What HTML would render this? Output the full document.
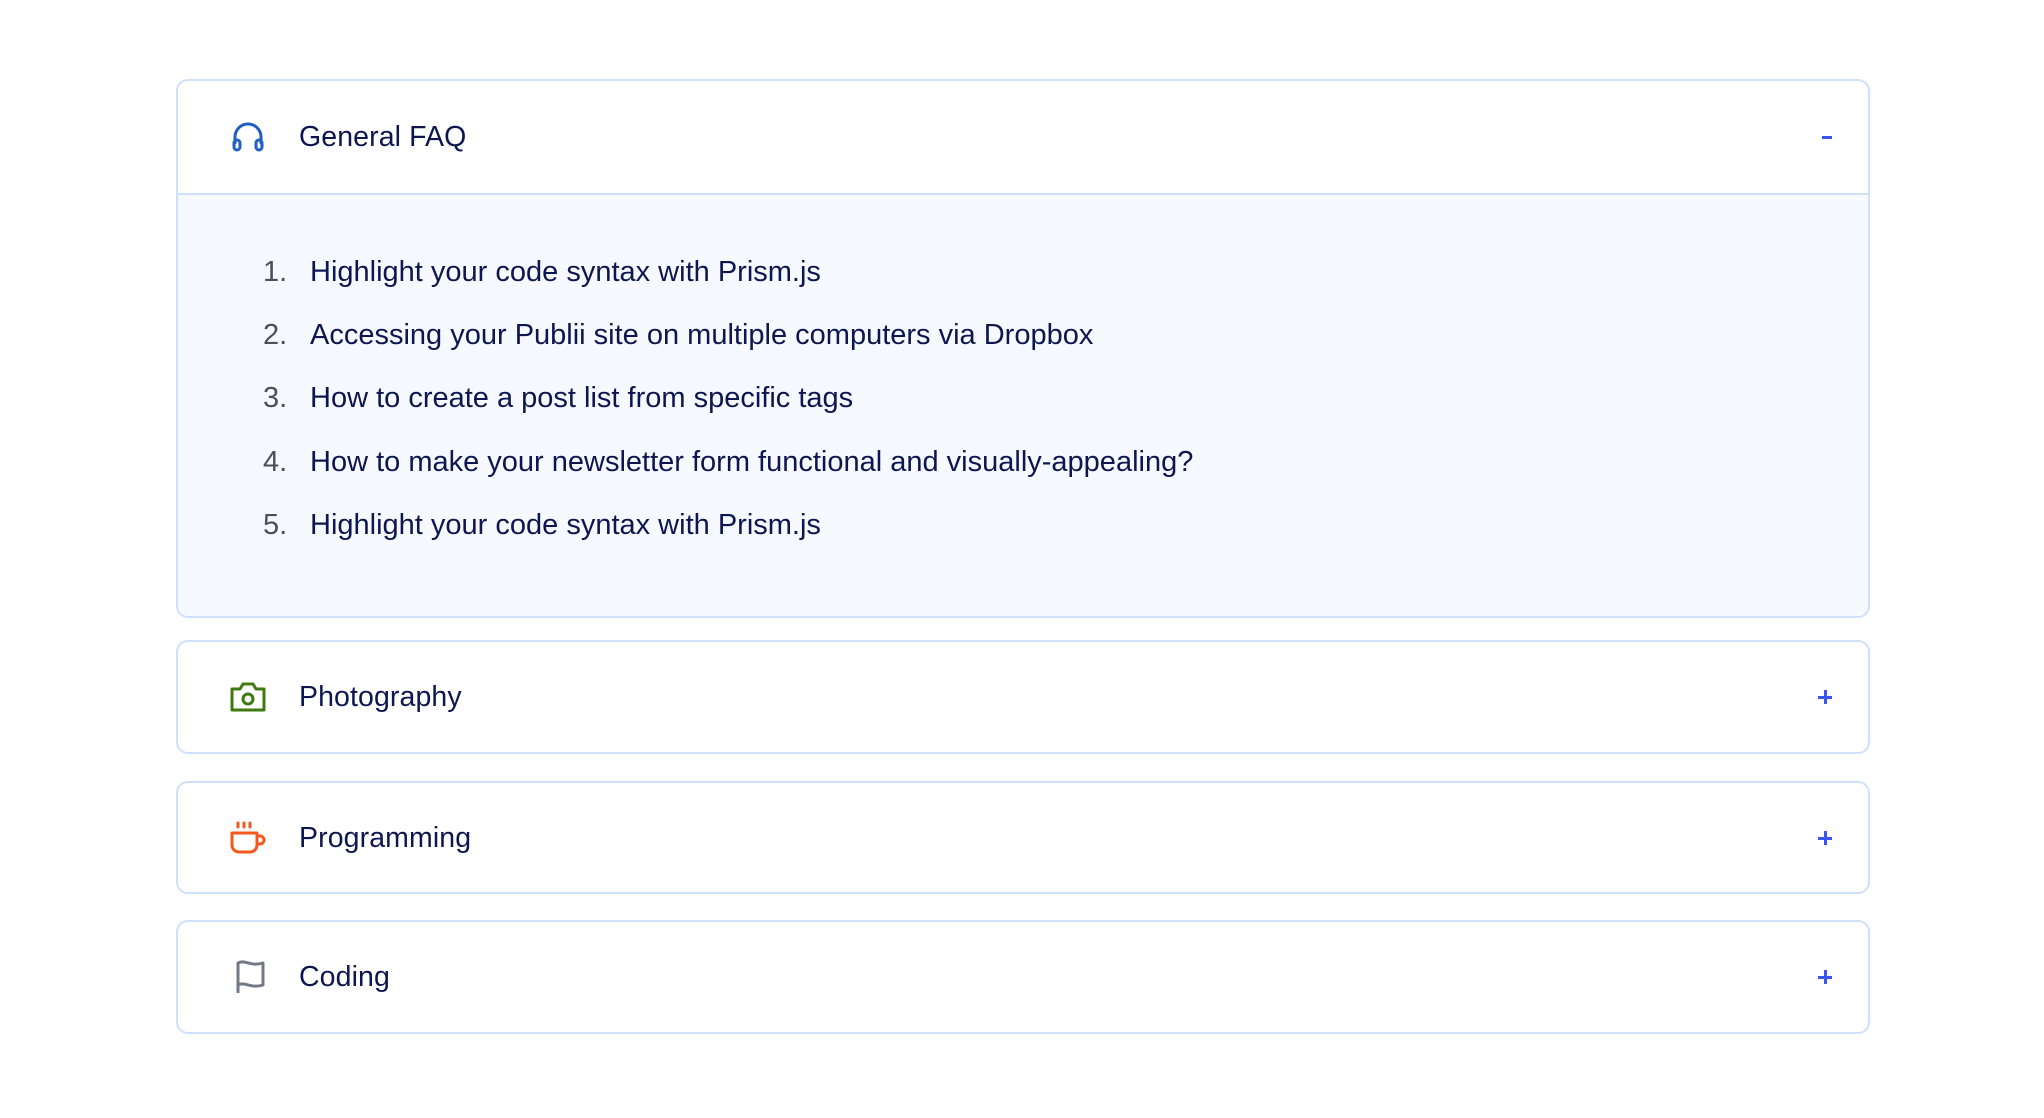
<!DOCTYPE html>
<html><head><meta charset="utf-8"><style>
*{margin:0;padding:0;box-sizing:border-box}
body{width:2044px;height:1118px;background:#fff;font-family:"Liberation Sans",sans-serif;position:relative;overflow:hidden}
.box{position:absolute;left:176px;width:1694px;border:2px solid #cfe0fb;border-radius:12px;background:#fff;overflow:hidden}
.hd{position:relative;height:110px}
.hd svg{position:absolute;left:51px;top:50%;transform:translateY(-50%)}
.hd .t{position:absolute;left:121px;top:0;line-height:110px;font-size:28.5px;font-weight:500;color:#0d1650;letter-spacing:0.1px}
.hd .pm{position:absolute;right:36px;top:50%;width:14px;height:14px;transform:translateY(-50%)}
.pm:before{content:"";position:absolute;left:0;top:6px;width:14px;height:2.5px;background:#3b55f5}
.pm.plus:after{content:"";position:absolute;left:6px;top:0;width:2.5px;height:14px;background:#3b55f5}
.pm.minus:before{left:2px;width:10px;height:2.5px}
.body{background:#f6f9ff;border-top:2px solid #cfe0fb;height:304px;position:relative}
.li{position:absolute;left:0;font-size:29px;color:#0d1650;line-height:34px}
.li .n{position:absolute;left:85px;color:#4a4f5e}
.li .x{position:absolute;left:132px;white-space:nowrap}
</style></head><body>
<div class="box" style="top:79px;height:539px">
 <div class="hd" style="height:112px">
  <svg width="34" height="32" viewBox="0 0 34 32" fill="none" stroke="#1f5fbf" stroke-width="3" stroke-linecap="round" style="left:53px"><path d="M4 22V16A13 13 0 0 1 30 16V22"/><rect x="3" y="19" width="6" height="10" rx="3"/><rect x="25" y="19" width="6" height="10" rx="3"/></svg>
  <div class="t" style="line-height:112px">General FAQ</div>
  <div class="pm minus" style="right:34px"></div>
 </div>
 <div class="body" style="height:425px">
  <div class="li" style="top:60px"><span class="n">1.</span><span class="x">Highlight your code syntax with Prism.js</span></div>
  <div class="li" style="top:123px"><span class="n">2.</span><span class="x">Accessing your Publii site on multiple computers via Dropbox</span></div>
  <div class="li" style="top:186px"><span class="n">3.</span><span class="x">How to create a post list from specific tags</span></div>
  <div class="li" style="top:250px"><span class="n">4.</span><span class="x">How to make your newsletter form functional and visually-appealing?</span></div>
  <div class="li" style="top:313px"><span class="n">5.</span><span class="x">Highlight your code syntax with Prism.js</span></div>
 </div>
</div>
<div class="box" style="top:640px;height:114px"><div class="hd">
  <svg width="38" height="32" viewBox="0 0 38 32" fill="none" stroke="#3f7a12" stroke-width="3" stroke-linejoin="round"><path d="M3 8H11L14 3H24L27 8H35V29H3Z"/><circle cx="19" cy="18" r="5"/></svg>
  <div class="t">Photography</div><div class="pm plus"></div></div></div>
<div class="box" style="top:781px;height:113px"><div class="hd">
  <svg width="38" height="34" viewBox="0 0 38 34" fill="none" stroke="#f4581c" stroke-width="3" stroke-linecap="round" stroke-linejoin="round"><path d="M9 2V6M15 2V6M21 2V6"/><path d="M3 12H28V24A7 7 0 0 1 21 31H10A7 7 0 0 1 3 24Z"/><path d="M28 15H31A4 4 0 0 1 31 23H28"/></svg>
  <div class="t">Programming</div><div class="pm plus"></div></div></div>
<div class="box" style="top:920px;height:114px"><div class="hd">
  <svg width="34" height="36" viewBox="0 0 34 36" fill="none" stroke="#737887" stroke-width="3" stroke-linejoin="round" style="left:55px"><path d="M5 34V4C12 0 17 8 30 4V26C17 30 12 22 5 26"/></svg>
  <div class="t">Coding</div><div class="pm plus"></div></div></div>
</body></html>
